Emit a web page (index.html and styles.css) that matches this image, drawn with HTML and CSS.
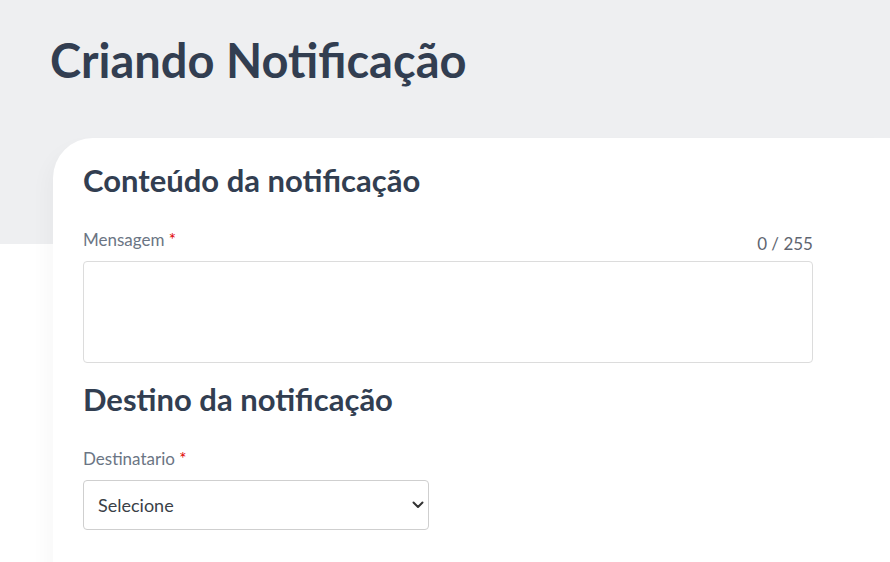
FILE: index.html
```html
<!DOCTYPE html>
<html lang="pt-BR">
<head>
  <meta charset="UTF-8">
  <meta name="viewport" content="width=device-width, initial-scale=1">
  <title>Criando Notificação</title>
  <link rel="stylesheet" href="styles.css">
</head>
<body>
  <div class="top">
    <h1>Criando Notificação</h1>
  </div>

  <div class="card">
    <h2>Conteúdo da notificação</h2>

    <div class="field-head">
      <label for="mensagem">Mensagem <span class="req">*</span></label>
      <span class="counter">0 / 255</span>
    </div>
    <textarea id="mensagem" maxlength="255"></textarea>

    <h2 class="second">Destino da notificação</h2>

    <label for="destinatario" class="label-sel">Destinatario <span class="req">*</span></label>
    <div class="select-wrap">
      <select id="destinatario">
        <option>Selecione</option>
      </select>
      <svg class="chevron" width="12" height="8" viewBox="0 0 12 8">
        <path d="M1.5 1.5 L6 6 L10.5 1.5" fill="none" stroke="#333" stroke-width="2" stroke-linecap="round" stroke-linejoin="round"/>
      </svg>
    </div>
  </div>
</body>
</html>
```

FILE: styles.css
```css
* {
  margin: 0;
  padding: 0;
  box-sizing: border-box;
}

html, body {
  height: 100%;
}

body {
  font-family: 'Lato', 'Noto Sans', sans-serif;
  background: linear-gradient(#eeeff1 0, #eeeff1 244px, #ffffff 244px);
  color: #333f52;
  overflow: hidden;
}

.top {
  padding: 30px 50px 0;
  height: 138px;
}

h1 {
  font-size: 47px;
  font-weight: 700;
  line-height: 60px;
  color: #323e51;
}

.card {
  margin-left: 53px;
  background: #fff;
  border-top-left-radius: 40px;
  padding: 22px 0 40px 30px;
  box-shadow: -6px 10px 20px rgba(0, 0, 0, 0.03);
  min-height: 440px;
}

h2 {
  font-size: 31px;
  font-weight: 700;
  line-height: 40px;
  color: #323e51;
}

h2.second {
  margin-top: 16px;
}

.field-head {
  width: 730px;
  display: flex;
  justify-content: space-between;
  align-items: flex-end;
  margin-top: 26px;
  height: 24px;
}

label {
  font-size: 17px;
  color: #6b7584;
  line-height: 20px;
}

.req {
  color: #e00000;
}

.counter {
  font-size: 17px;
  color: #5f6570;
  line-height: 20px;
  margin-bottom: -4px;
}

textarea {
  display: block;
  width: 730px;
  height: 102px;
  margin-top: 11px;
  border: 1px solid #dcdcdc;
  border-radius: 4px;
  resize: none;
  font-family: inherit;
  font-size: 16px;
  padding: 10px 14px;
}

.label-sel {
  display: block;
  margin-top: 30px;
}

.select-wrap {
  position: relative;
  width: 346px;
  margin-top: 11px;
}

select {
  display: block;
  width: 100%;
  height: 50px;
  border: 1px solid #cfcfcf;
  border-radius: 4px;
  background: #fff;
  appearance: none;
  -webkit-appearance: none;
  font-family: inherit;
  font-size: 18px;
  color: #3a3f47;
  padding: 0 14px;
}

.chevron {
  position: absolute;
  right: 5px;
  top: 21px;
  pointer-events: none;
}
```
